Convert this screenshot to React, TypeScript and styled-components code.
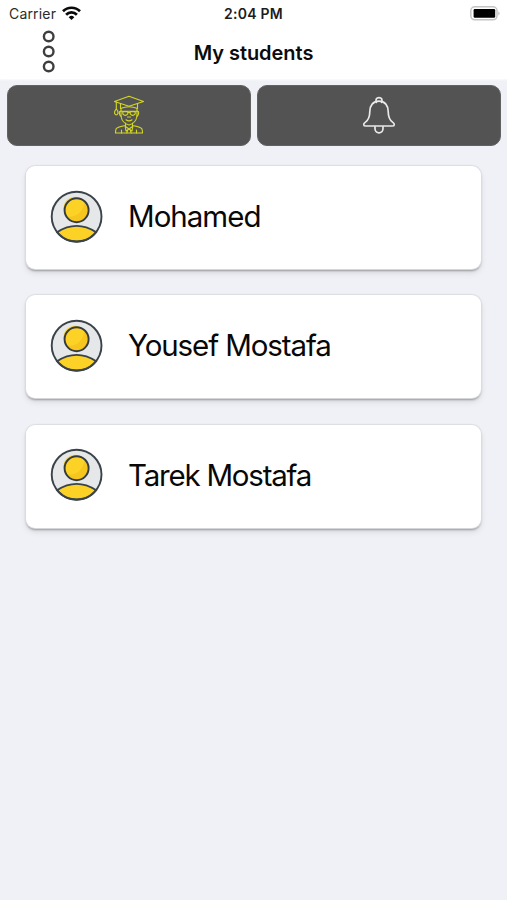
import React from "react";
import styled, { createGlobalStyle } from "styled-components";

const GlobalStyle = createGlobalStyle`
  * { box-sizing: border-box; }
  body { margin: 0; background: #eff1f6; font-family: Inter, "Liberation Sans", sans-serif; color: #0b0b0c; }
`;

const Screen = styled.main`
  min-height: 900px;
  background: #eff1f6;
`;

const Header = styled.header`
  height: 79px;
  background: #fff;
  box-shadow: 0 1px 2px rgba(255, 255, 255, 0.8);
`;

const StatusBar = styled.div`
  display: grid;
  grid-template-columns: 1fr auto 1fr;
  align-items: center;
  height: 27px;
  padding: 0 6px 0 9px;
`;

const Carrier = styled.div`
  display: flex;
  align-items: center;
  gap: 6px;
  font-size: 14px;
  line-height: 20px;
  letter-spacing: 0.18px;
  color: #2b2b2c;
`;

const Clock = styled.time`
  margin-right: 3px;
  font-size: 14px;
  font-weight: 600;
  letter-spacing: 0.25px;
  color: #1c1c1d;
`;

const BatterySlot = styled.div`
  display: flex;
  justify-content: flex-end;
`;

const NavBar = styled.div`
  display: grid;
  grid-template-columns: 97px 1fr 97px;
  align-items: center;
  height: 50px;
`;

const MenuButton = styled.button`
  display: flex;
  justify-content: center;
  padding: 0 0 2px;
  border: 0;
  background: none;
`;

const Title = styled.h1`
  margin: 0;
  padding-top: 1px;
  text-align: center;
  font-size: 20px;
  line-height: 26px;
  font-weight: 600;
  letter-spacing: -0.04px;
`;

const Tabs = styled.nav`
  display: grid;
  grid-template-columns: 1fr 1fr;
  gap: 6px;
  padding: 6px 6px 0 7px;
`;

const Tab = styled.button<{ $tint: string }>`
  display: flex;
  align-items: center;
  justify-content: center;
  height: 61px;
  padding: 0 0 1px;
  border: 1px solid #626262;
  border-radius: 10px;
  background: #535353;
  color: ${(p) => p.$tint};
`;

const List = styled.ul`
  display: flex;
  flex-direction: column;
  gap: 26.4px;
  margin: 0;
  padding: 20px 26px 0;
  list-style: none;
`;

const Card = styled.li`
  display: flex;
  align-items: center;
  gap: 25px;
  height: 103px;
  padding: 0 24px 3px;
  border-radius: 9px;
  background: #fff;
  box-shadow: 0 0 1px 1px #dcdde2, 0 2px 2px rgba(0, 0, 0, 0.32), 0 4px 6px rgba(0, 0, 0, 0.1);
`;

const Name = styled.span<{ $tracking: number }>`
  font-size: 29.5px;
  line-height: 38px;
  letter-spacing: ${(p) => p.$tracking}px;
  color: #080808;
`;

const WifiIcon = () => (
  <svg width="19" height="15" viewBox="0 0 19 15" fill="none" stroke="#0a0a0a" strokeWidth="2.7">
    <path d="M1 5.3A12 12 0 0 1 18 5.3" />
    <path d="M4.1 8.7A7.6 7.6 0 0 1 14.9 8.7" />
    <path d="M9.5 14 6.7 11.2A4 4 0 0 1 12.3 11.2Z" fill="#0a0a0a" stroke="none" />
  </svg>
);

const BatteryIcon = () => (
  <svg width="31" height="15" viewBox="0 0 31 15">
    <rect x="0.8" y="0.8" width="26.2" height="13" rx="4" fill="#fff" stroke="#c4c4c4" strokeWidth="1.5" />
    <rect x="3.6" y="3" width="21.6" height="8.8" rx="1.2" fill="#000" />
    <path d="M28.5 5.2q2 2.2 0 4.2z" fill="#a8a8a8" />
  </svg>
);

const DotsIcon = () => (
  <svg width="14" height="43" viewBox="0 0 14 43" fill="none" stroke="#3e3e3f" strokeWidth="2.4">
    <circle cx="6.7" cy="6.5" r="4.8" />
    <circle cx="6.7" cy="21.5" r="4.8" />
    <circle cx="6.7" cy="36.5" r="4.8" />
  </svg>
);

const GraduateIcon = () => (
  <svg width="32" height="40" viewBox="0 0 32 40" fill="none" stroke="currentColor" strokeWidth="1.1" strokeLinejoin="round" strokeLinecap="round">
    <path d="M1.5 6.5 16 1.2 30.5 6.5 16 11.2Z" />
    <path d="M7.5 8.5v5Q16 10 24.5 13.5v-5" />
    <path d="M3.3 7.3v6.5M3.3 13.8q-1.8 1.8-1.8 4.5 1.8 3.4 3.6 0 0-2.7-1.8-4.5" />
    <path d="M8 13.5v8q1.5 7 8 8.5 6.5-1.5 8-8.5v-8" />
    <path d="M8 16q-2 0-1.6 2.6.4 2.4 2 2.6M24 16q2 0 1.6 2.6-.4 2.4-2 2.6" />
    <path d="M8 16.2h16M9.8 16.8h5v2q-2.4 3.2-5 0zM17.2 16.8h5v2q-2.6 3.2-5 0zM14.8 17.5h2.4M14.5 22h3M13 24.8q3 2.2 6 0" />
    <path d="M12.5 28v3.5L16 34l3.5-2.5V28M12.5 30.5q-8 1.5-9.3 3.2-.7 1.2-.7 4.3h27q0-3.1-.7-4.3-1.3-1.7-9.3-3.2" />
    <path d="M12.2 31.5 13 36l3-2 3 2 .8-4.5M14.8 34.8 13.8 38M17.2 34.8l1 3.2M8.5 35v3M23.5 35v3" />
  </svg>
);

const BellIcon = () => (
  <svg width="34" height="40" viewBox="0 0 34 40" fill="none" stroke="currentColor" strokeWidth="1.7" strokeLinejoin="round" strokeLinecap="round">
    <path d="M14.2 7.4q-1-4.8 2.8-4.8t2.8 4.8" />
    <path d="M17 6.2C11 6.2 7.8 10.5 7.8 16.5 7.8 22.5 6.6 25 3.2 27.4 1 29 1.2 31 4 31H30C32.8 31 33 29 30.8 27.4 27.4 25 26.2 22.5 26.2 16.5 26.2 10.5 23 6.2 17 6.2Z" />
    <path d="M13 31.8v2a4 4 0 0 0 8 0v-2" />
  </svg>
);

const Avatar = () => (
  <svg width="53" height="53" viewBox="0 0 53 53">
    <circle cx="26.6" cy="26.6" r="24.9" fill="#e5e7e8" />
    <path d="M7 42.2Q26.6 29.6 46.2 42.2A24.9 24.9 0 0 1 7 42.2Z" fill="#fcd226" stroke="#3a4349" strokeWidth="1.8" />
    <circle cx="26.6" cy="26.6" r="24.9" fill="none" stroke="#3a4349" strokeWidth="1.9" />
    <circle cx="26.6" cy="20.2" r="12" fill="#f6c51e" />
    <path d="M34.8 12.2A11.5 11.5 0 1 0 17 26.5Q31 28 34.8 12.2Z" fill="#fcd226" />
    <circle cx="26.6" cy="20.2" r="12" fill="none" stroke="#343c40" strokeWidth="1.9" />
  </svg>
);

const students = [
  { name: "Mohamed", tracking: -1 },
  { name: "Yousef Mostafa", tracking: -1.1 },
  { name: "Tarek Mostafa", tracking: -1.22 },
];

export default function App() {
  return (
    <>
      <GlobalStyle />
      <Screen>
        <Header>
          <StatusBar>
            <Carrier>Carrier <WifiIcon /></Carrier>
            <Clock>2:04 PM</Clock>
            <BatterySlot><BatteryIcon /></BatterySlot>
          </StatusBar>
          <NavBar>
            <MenuButton aria-label="Menu"><DotsIcon /></MenuButton>
            <Title>My students</Title>
          </NavBar>
        </Header>
        <Tabs>
          <Tab $tint="#d5d820" aria-label="Students"><GraduateIcon /></Tab>
          <Tab $tint="#e9e9e9" aria-label="Notifications"><BellIcon /></Tab>
        </Tabs>
        <List>
          {students.map((s) => (
            <Card key={s.name}>
              <Avatar />
              <Name $tracking={s.tracking}>{s.name}</Name>
            </Card>
          ))}
        </List>
      </Screen>
    </>
  );
}
